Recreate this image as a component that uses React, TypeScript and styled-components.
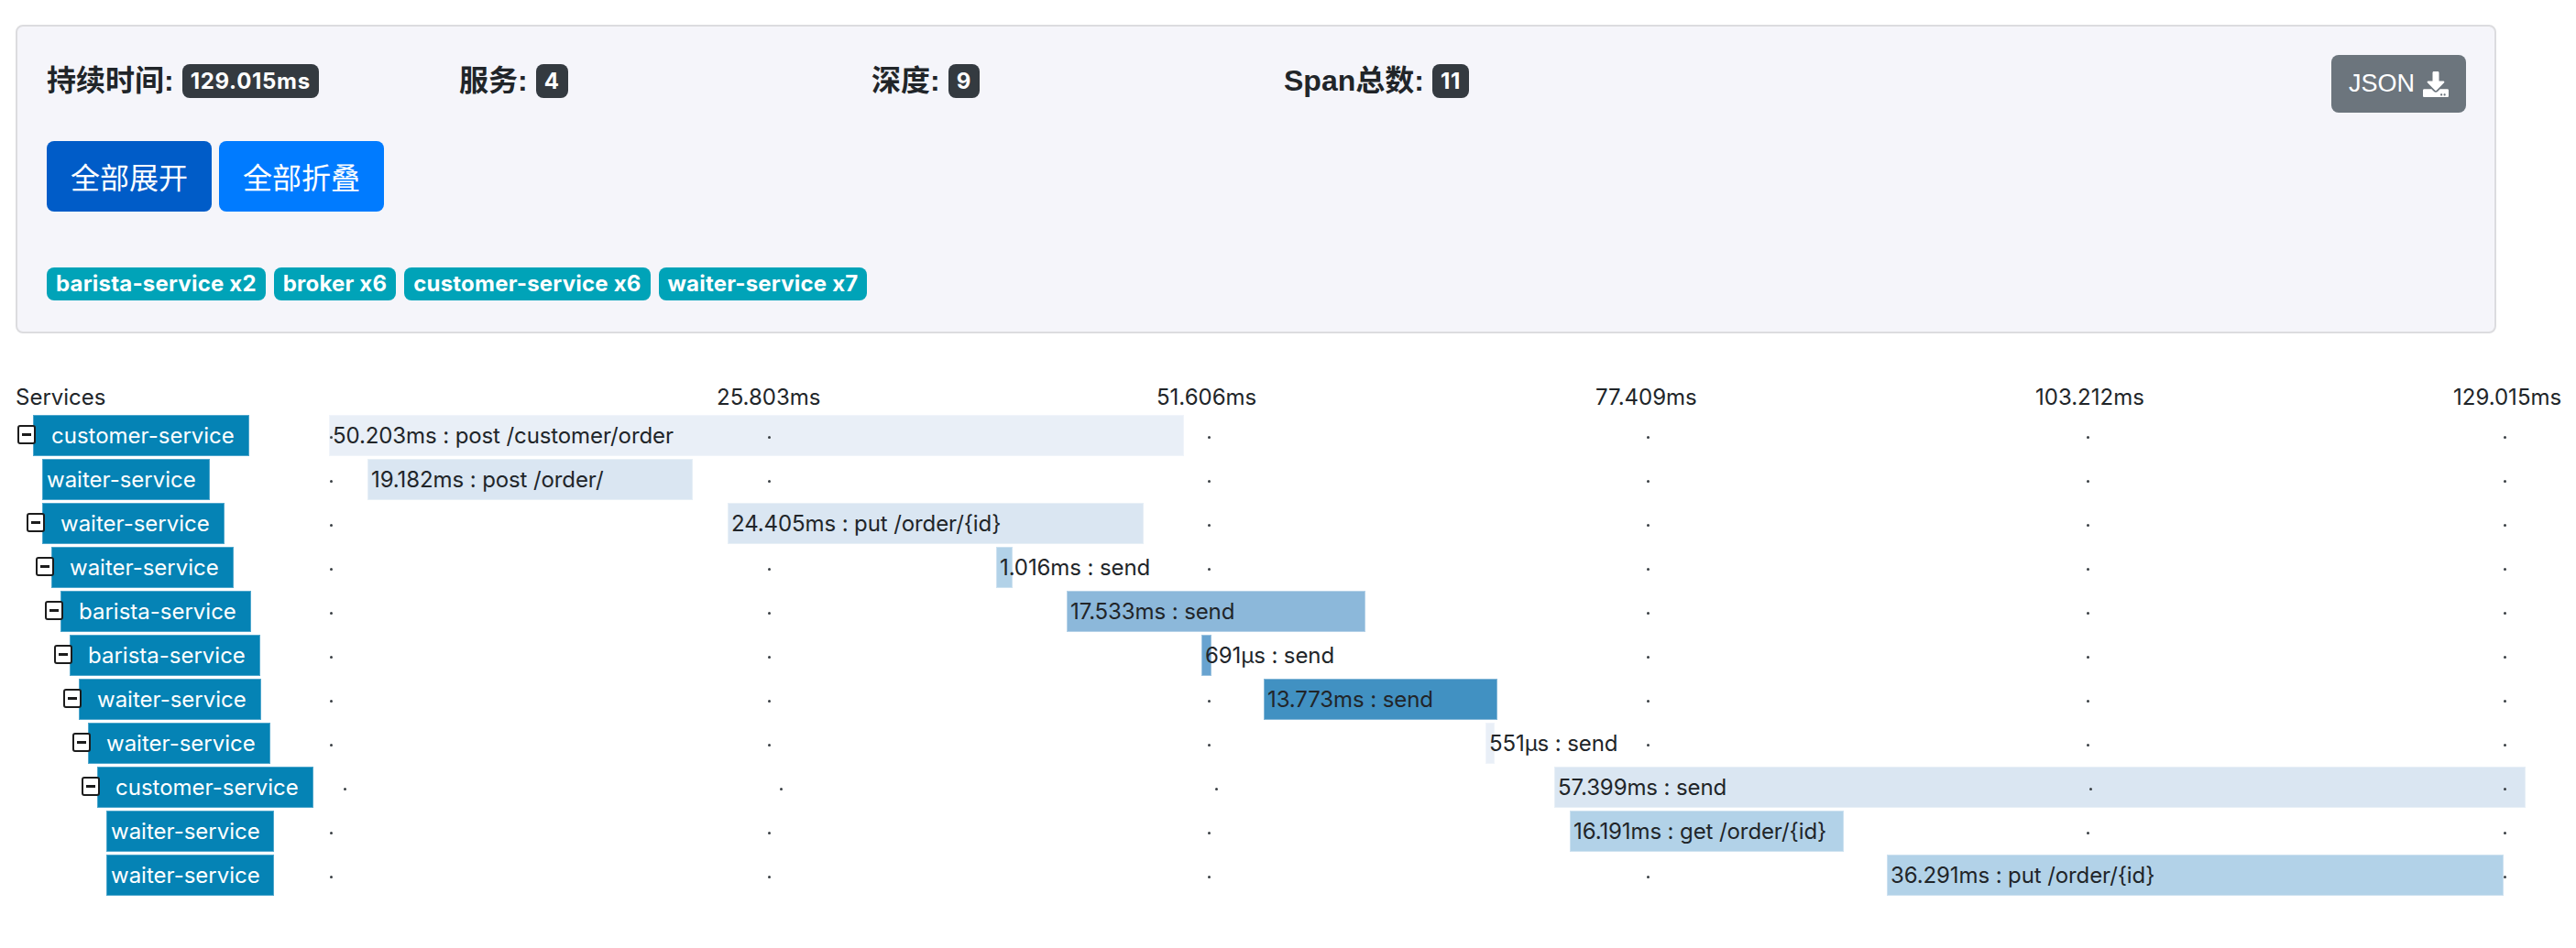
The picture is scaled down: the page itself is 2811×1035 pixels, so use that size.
import React from "react";
import styled, { createGlobalStyle } from "styled-components";
import { FaDownload } from "react-icons/fa";

/* ─────────────── Data ─────────────── */
interface Span {
  service: string;
  level: number;
  toggle: boolean;
  left: number;
  right: number;
  color: string;
  text: string;
  dots: number[];
}

const TRACK_X = 359;

const BAND_1 = "#e9eff7";
const BAND_2 = "#dae6f2";
const BAND_3 = "#b2d2e8";
const BAND_4 = "#8cb8da";
const BAND_5 = "#68a3d0";
const BAND_6 = "#4191c2";

const spans: Span[] = [
  { service: "customer-service", level: 0, toggle: true, left: 359, right: 1292, color: BAND_1, text: "50.203ms : post /customer/order", dots: [361, 839, 1319, 1798, 2278, 2733] },
  { service: "waiter-service", level: 1, toggle: false, left: 401, right: 756, color: BAND_2, text: "19.182ms : post /order/", dots: [361, 839, 1319, 1798, 2278, 2733] },
  { service: "waiter-service", level: 1, toggle: true, left: 794, right: 1248, color: BAND_2, text: "24.405ms : put /order/{id}", dots: [361, 1319, 1798, 2278, 2733] },
  { service: "waiter-service", level: 2, toggle: true, left: 1087, right: 1105, color: BAND_3, text: "1.016ms : send", dots: [361, 839, 1319, 1798, 2278, 2733] },
  { service: "barista-service", level: 3, toggle: true, left: 1164, right: 1490, color: BAND_4, text: "17.533ms : send", dots: [361, 839, 1798, 2278, 2733] },
  { service: "barista-service", level: 4, toggle: true, left: 1311, right: 1322, color: BAND_5, text: "691µs : send", dots: [361, 839, 1798, 2278, 2733] },
  { service: "waiter-service", level: 5, toggle: true, left: 1379, right: 1634, color: BAND_6, text: "13.773ms : send", dots: [361, 839, 1319, 1798, 2278, 2733] },
  { service: "waiter-service", level: 6, toggle: true, left: 1621, right: 1631, color: BAND_1, text: "551µs : send", dots: [361, 839, 1319, 1798, 2278, 2733] },
  { service: "customer-service", level: 7, toggle: true, left: 1696, right: 2756, color: BAND_2, text: "57.399ms : send", dots: [376, 852, 1327, 2281, 2733] },
  { service: "waiter-service", level: 8, toggle: false, left: 1713, right: 2012, color: BAND_3, text: "16.191ms : get /order/{id}", dots: [361, 839, 1319, 2278, 2733] },
  { service: "waiter-service", level: 8, toggle: false, left: 2059, right: 2732, color: BAND_3, text: "36.291ms : put /order/{id}", dots: [361, 839, 1319, 1798, 2733] },
];

const stats = [
  { label: "持续时间:", value: "129.015ms" },
  { label: "服务:", value: "4" },
  { label: "深度:", value: "9" },
  { label: "Span总数:", value: "11" },
];

const tags = ["barista-service x2", "broker x6", "customer-service x6", "waiter-service x7"];
const ticks = ["25.803ms", "51.606ms", "77.409ms", "103.212ms", "129.015ms"];

/* ─────────────── Styled Components ─────────────── */
const GlobalStyle = createGlobalStyle`
  html, body {
    margin: 0;
    padding: 0;
    background: #fff;
  }
  body {
    font-family: Inter, "Noto Sans CJK SC", "Liberation Sans", sans-serif;
    color: #212529;
  }
  * {
    box-sizing: border-box;
  }
`;

const Page = styled.div`
  width: 2811px;
  height: 1035px;
  padding: 27px 0 0 17px;
  overflow: hidden;
`;

const Panel = styled.section`
  width: 2707px;
  height: 337px;
  padding: 31px 31px 0 32px;
  background: #f5f5fa;
  border: 2px solid #dcdcdf;
  border-radius: 8px;
`;

const StatsRow = styled.div`
  display: flex;
  height: 63px;
`;

const Stat = styled.div`
  flex: 0 0 450px;
  display: flex;
  align-items: flex-start;
  gap: 9px;
  padding-top: 10px;
  font-size: 32px;
  line-height: 37px;
  font-weight: 700;
  font-family: "Liberation Sans", "Noto Sans CJK SC", sans-serif;
`;

const Badge = styled.span`
  height: 37px;
  padding: 0 9px;
  border-radius: 8px;
  background: #343a40;
  color: #fff;
  font-family: Inter, sans-serif;
  font-size: 24px;
  letter-spacing: 0.7px;
  line-height: 37px;
  font-weight: 700;
`;

const JsonButton = styled.button`
  margin-left: auto;
  width: 147px;
  height: 63px;
  display: flex;
  align-items: center;
  justify-content: center;
  gap: 9px;
  border: none;
  border-radius: 8px;
  background: #6c757d;
  color: #fff;
  font-family: "Liberation Sans", sans-serif;
  font-size: 27px;
`;

const ButtonRow = styled.div`
  display: flex;
  gap: 8px;
  margin-top: 31px;
`;

const ActionButton = styled.button<{ $active?: boolean }>`
  width: 180px;
  height: 77px;
  padding-bottom: 3px;
  border: none;
  border-radius: 8px;
  background: ${({ $active }) => ($active ? "#005cc8" : "#007bff")};
  color: #fff;
  font-family: "Noto Sans CJK SC", sans-serif;
  font-size: 32px;
`;

const TagRow = styled.div`
  display: flex;
  gap: 9px;
  margin-top: 61px;
`;

const Tag = styled.span`
  height: 36px;
  padding: 0 10px;
  border-radius: 8px;
  background: #00a3b8;
  color: #fff;
  font-size: 24px;
  letter-spacing: 0.2px;
  line-height: 36px;
  font-weight: 700;
`;

const Chart = styled.section`
  margin-top: 49px;
  font-size: 24px;
`;

const AxisRow = styled.div`
  display: grid;
  grid-template-columns: 765px 480px 479px 480px 456px auto;
  height: 40px;
  line-height: 42px;
`;

const Rows = styled.div`
  display: flex;
  flex-direction: column;
  gap: 3px;
`;

const Row = styled.div`
  display: flex;
  height: 45px;
`;

const LabelCell = styled.div<{ $level: number; $leaf: boolean }>`
  flex: 0 0 342px;
  display: flex;
  align-items: flex-start;
  padding-left: ${({ $level, $leaf }) => 2 + $level * 10 + ($leaf ? 17 : 0)}px;
`;

const Toggle = styled.span`
  position: relative;
  z-index: 1;
  flex: 0 0 20px;
  height: 21px;
  margin: 11px -3px 0 0;
  display: flex;
  align-items: center;
  justify-content: center;
  border: 2px solid #1c1c1c;
  border-radius: 3px;
  background: #fff;

  &::before {
    content: "";
    width: 10px;
    height: 3px;
    background: #1c1c1c;
  }
`;

const Label = styled.div<{ $leaf: boolean }>`
  height: 45px;
  padding: ${({ $leaf }) => ($leaf ? "0 14px 0 4px" : "0 15px 0 19px")};
  background: #0583b5;
  border: 1px solid #4ea6cc;
  color: #fff;
  line-height: 43px;
  white-space: nowrap;
`;

const Track = styled.div`
  position: relative;
  flex: 1;
  height: 45px;
`;

const Bar = styled.div<{ $color: string }>`
  position: absolute;
  top: 0;
  height: 45px;
  padding-left: 3px;
  background: ${({ $color }) => $color};
  border: 1px solid rgba(255, 255, 255, 0.35);
  letter-spacing: -0.1px;
  line-height: 43px;
  white-space: nowrap;
`;

const Dot = styled.span`
  position: absolute;
  top: 23px;
  width: 3px;
  height: 3px;
  margin-left: -1px;
  border-radius: 50%;
  background: #3a3f44;
`;

/* ─────────────── Component ─────────────── */
const App: React.FC = () => (
  <Page>
    <GlobalStyle />
    <Panel>
      <StatsRow>
        {stats.map((s) => (
          <Stat key={s.label}>
            {s.label}
            <Badge>{s.value}</Badge>
          </Stat>
        ))}
        <JsonButton>
          JSON
          <FaDownload size={28} />
        </JsonButton>
      </StatsRow>
      <ButtonRow>
        <ActionButton $active>全部展开</ActionButton>
        <ActionButton>全部折叠</ActionButton>
      </ButtonRow>
      <TagRow>
        {tags.map((t) => (
          <Tag key={t}>{t}</Tag>
        ))}
      </TagRow>
    </Panel>

    <Chart>
      <AxisRow>
        <span>Services</span>
        {ticks.map((t) => (
          <span key={t}>{t}</span>
        ))}
      </AxisRow>
      <Rows>
        {spans.map((s, i) => (
          <Row key={i}>
            <LabelCell $level={s.level} $leaf={!s.toggle}>
              {s.toggle && <Toggle />}
              <Label $leaf={!s.toggle}>{s.service}</Label>
            </LabelCell>
            <Track>
              <Bar
                $color={s.color}
                style={{ left: s.left - TRACK_X, width: s.right - s.left }}
              >
                {s.text}
              </Bar>
              {s.dots.map((x) => (
                <Dot key={x} style={{ left: x - TRACK_X }} />
              ))}
            </Track>
          </Row>
        ))}
      </Rows>
    </Chart>
  </Page>
);

export default App;
